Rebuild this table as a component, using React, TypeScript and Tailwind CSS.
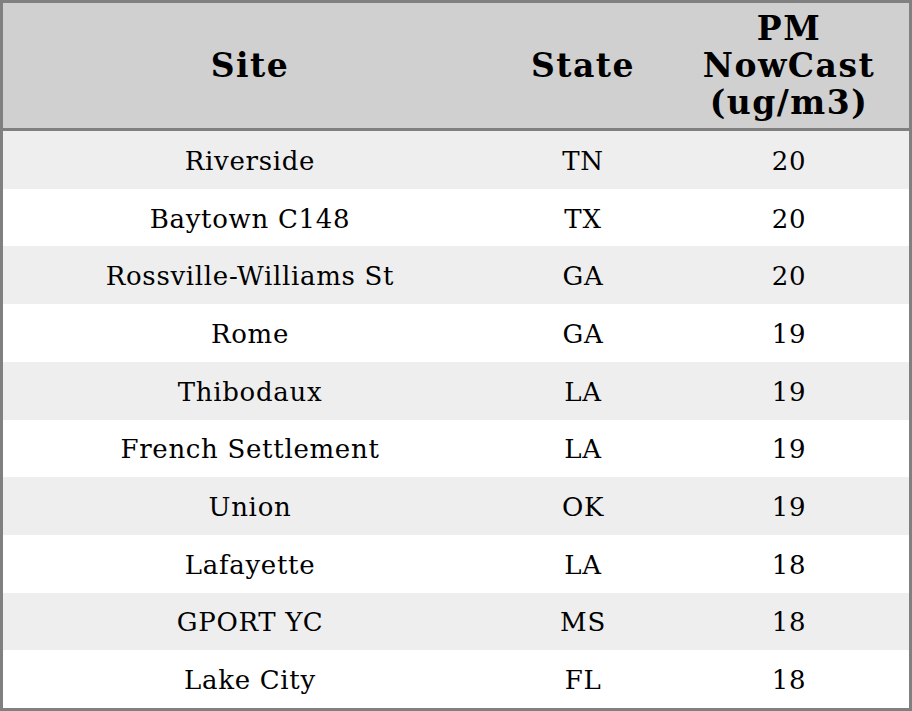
const rows = [
  ["Riverside", "TN", "20"],
  ["Baytown C148", "TX", "20"],
  ["Rossville-Williams St", "GA", "20"],
  ["Rome", "GA", "19"],
  ["Thibodaux", "LA", "19"],
  ["French Settlement", "LA", "19"],
  ["Union", "OK", "19"],
  ["Lafayette", "LA", "18"],
  ["GPORT YC", "MS", "18"],
  ["Lake City", "FL", "18"],
];

export default function App() {
  return (
    <div className="w-[912px] h-[711px] bg-white font-['DejaVu_Serif',serif] text-black">
      <div className="w-full h-full border-[3px] border-[#808080] flex flex-col">
        {/* header */}
        <div className="grid grid-cols-[494px_172px_240px] h-[128px] shrink-0 bg-[#d0d0d0] border-b-[3px] border-[#808080] items-center text-center text-[33px] font-bold leading-[37px] tracking-[1.5px]">
          <div>Site</div>
          <div>State</div>
          <div>
            PM
            <br />
            NowCast
            <br />
            (ug/m3)
          </div>
        </div>
        {/* body */}
        <div className="flex-1 flex flex-col">
          {rows.map((r, i) => (
            <div
              key={r[0]}
              className={
                "flex-1 grid grid-cols-[494px_172px_240px] items-center pt-[3px] text-center text-[26px] tracking-[0.7px] " +
                (i % 2 === 0 ? "bg-[#eeeeee]" : "bg-white")
              }
            >
              <div>{r[0]}</div>
              <div>{r[1]}</div>
              <div>{r[2]}</div>
            </div>
          ))}
        </div>
      </div>
    </div>
  );
}
